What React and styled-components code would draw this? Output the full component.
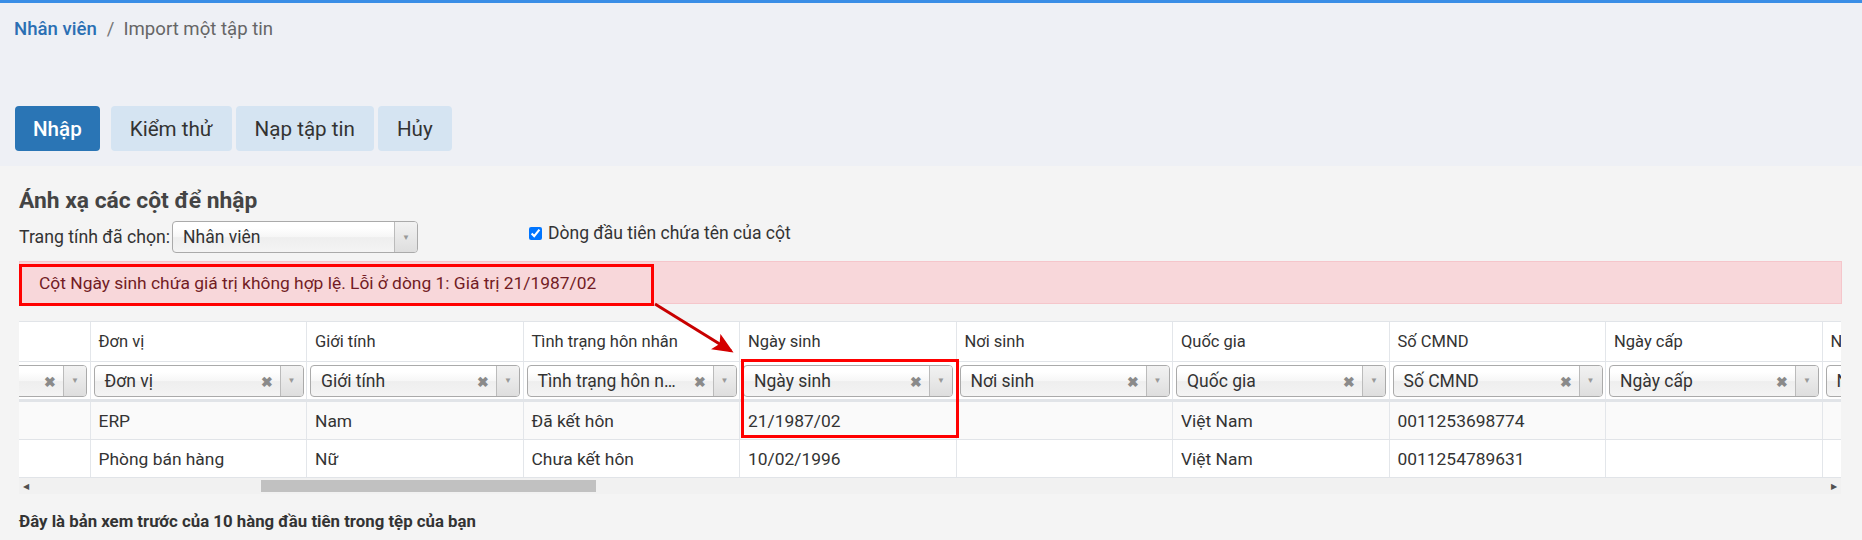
import React, { useLayoutEffect, useRef } from "react";
import styled, { createGlobalStyle } from "styled-components";

const GlobalStyle = createGlobalStyle`
  html, body {
    margin: 0;
    padding: 0;
    background: #f4f4f4;
    font-family: Roboto, "Liberation Sans", Arial, sans-serif;
    color: #333;
  }
  * { box-sizing: border-box; }
`;

const Page = styled.div`
  position: relative;
  width: 1862px;
  min-height: 540px;
`;

const TopLine = styled.div`
  height: 3px;
  background: #3a8ee6;
  box-shadow: 0 1px 3px rgba(0, 0, 0, 0.25);
`;

const Header = styled.div`
  background: #eef0f5;
  padding: 14px 15px 15px 14px;
`;

const Breadcrumb = styled.div`
  display: flex;
  align-items: center;
  height: 24px;
  font-size: 18.6px;
  color: #666;
  .link {
    color: #2b6fb3;
    font-weight: 500;
  }
  .sep {
    padding: 0 9px 0 10px;
    color: #777;
  }
`;

const Toolbar = styled.div`
  display: flex;
  gap: 4px;
  margin-top: 65px;
  margin-left: 1px;
`;

const Button = styled.button`
  height: 45px;
  padding: 0 ${(p) => (p.$primary ? 18 : 19)}px;
  margin-right: ${(p) => (p.$primary ? 7 : 0)}px;
  border: none;
  border-radius: 4px;
  font-family: Roboto, "Liberation Sans", Arial, sans-serif;
  font-size: 20.6px;
  font-weight: ${(p) => (p.$primary ? 500 : 400)};
  color: ${(p) => (p.$primary ? "#fff" : "#333")};
  background: ${(p) => (p.$primary ? "#2a75b5" : "#d5e4f2")};
  cursor: pointer;
`;

const Content = styled.div`
  padding: 22px 20px 0 19px;
`;

const Title = styled.h2`
  margin: 0;
  font-size: 22.8px;
  line-height: 25px;
  font-weight: 700;
  color: #444;
`;

const SheetRow = styled.div`
  display: flex;
  align-items: center;
  margin-top: 8px;
  height: 32px;
`;

const Label = styled.span`
  font-size: 17.7px;
  color: #333;
  margin-right: 2px;
`;

const ChosenSelect = styled.div`
  position: relative;
  flex-shrink: 0;
  display: flex;
  align-items: center;
  width: ${(p) => p.$width}px;
  height: 32px;
  border: 1px solid #aaa;
  border-radius: 4px;
  background: linear-gradient(#fff 20%, #f6f6f6 50%, #eee 52%, #f4f4f4 100%);
  font-size: 17.5px;
  color: #333;
  overflow: hidden;
  .value {
    flex: 1;
    min-width: 0;
    padding-left: 10px;
    white-space: nowrap;
    overflow: hidden;
    text-overflow: ellipsis;
  }
  .clear {
    width: 30px;
    padding-left: 4px;
    text-align: center;
    color: #8a8a8a;
    font-size: 14px;
    font-weight: 700;
    padding-top: 3px;
  }
  .arrow {
    display: flex;
    align-items: center;
    justify-content: center;
    width: 23px;
    height: 100%;
    border-left: 1px solid #bbb;
    background: linear-gradient(#f2f2f2, #dedede);
    color: #999;
    font-size: 8px;
  }
`;

const CheckLabel = styled.label`
  display: flex;
  align-items: center;
  margin-left: 111px;
  margin-top: -8px;
  font-size: 17.5px;
  color: #333;
  input {
    margin: 0 6px 0 0;
    width: 13px;
    height: 13px;
  }
`;

const Alert = styled.div`
  margin-top: 8px;
  height: 43px;
  display: flex;
  align-items: center;
  padding-left: 19px;
  background: #f8d7da;
  border: 1px solid #f5c6cb;
  color: #721c24;
  font-size: 17.4px;
`;

const TableViewport = styled.div`
  margin-top: 17px;
  overflow: hidden;
  width: 1822px;
  border-top: 1px solid #e1e4e8;
`;

const TableInner = styled.div`
  width: max-content;
`;

const Row = styled.div`
  display: flex;
  height: ${(p) => p.$h}px;
  background: ${(p) => p.$bg || "#fff"};
  border-bottom: ${(p) => p.$bb || 1}px solid #e1e4e8;
`;

const Cell = styled.div`
  width: 216.5px;
  flex-shrink: 0;
  display: flex;
  align-items: center;
  padding: 0 ${(p) => (p.$select ? 3 : 8)}px;
  border-right: 1px solid #e3e6ea;
  font-size: ${(p) => (p.$head ? 16.5 : 17.4)}px;
  color: #333;
  white-space: nowrap;
  overflow: hidden;
`;

const ScrollBar = styled.div`
  display: flex;
  align-items: center;
  width: 1822px;
  height: 16px;
  background: #f1f1f1;
  padding: 0 2px;
  .btn {
    width: 10px;
    font-size: 8px;
    color: #505050;
    text-align: center;
  }
  .track {
    flex: 1;
    height: 100%;
    display: flex;
    align-items: center;
    padding-left: 230px;
  }
  .thumb {
    width: 335px;
    height: 12px;
    background: #c1c1c1;
  }
`;

const Note = styled.div`
  margin-top: 17px;
  font-size: 16.8px;
  font-weight: 700;
  color: #333;
`;

const Overlay = styled.svg`
  position: absolute;
  top: 0;
  left: 0;
  pointer-events: none;
`;

const columns = [
  { name: "Họ và tên", rows: ["Nguyễn Văn An", "Trần Thị Bình"] },
  { name: "Đơn vị", rows: ["ERP", "Phòng bán hàng"] },
  { name: "Giới tính", rows: ["Nam", "Nữ"] },
  { name: "Tình trạng hôn nhân", rows: ["Đã kết hôn", "Chưa kết hôn"] },
  { name: "Ngày sinh", rows: ["21/1987/02", "10/02/1996"] },
  { name: "Nơi sinh", rows: ["", ""] },
  { name: "Quốc gia", rows: ["Việt Nam", "Việt Nam"] },
  { name: "Số CMND", rows: ["0011253698774", "0011254789631"] },
  { name: "Ngày cấp", rows: ["", ""] },
  { name: "Nơi cấp", rows: ["", ""] },
];

function Select({ value, width, clear }) {
  return (
    <ChosenSelect $width={width}>
      <span className="value">{value}</span>
      {clear && <span className="clear">✖</span>}
      <span className="arrow">▼</span>
    </ChosenSelect>
  );
}

export default function App() {
  const viewport = useRef(null);
  useLayoutEffect(() => {
    if (viewport.current) viewport.current.scrollLeft = 145;
  }, []);

  return (
    <Page>
      <GlobalStyle />
      <TopLine />
      <Header>
        <Breadcrumb>
          <span className="link">Nhân viên</span>
          <span className="sep">/</span>
          <span>Import một tập tin</span>
        </Breadcrumb>
        <Toolbar>
          <Button $primary>Nhập</Button>
          <Button>Kiểm thử</Button>
          <Button>Nạp tập tin</Button>
          <Button>Hủy</Button>
        </Toolbar>
      </Header>
      <Content>
        <Title>Ánh xạ các cột để nhập</Title>
        <SheetRow>
          <Label>Trang tính đã chọn:</Label>
          <Select value="Nhân viên" width={246} />
          <CheckLabel>
            <input type="checkbox" checked readOnly />
            Dòng đầu tiên chứa tên của cột
          </CheckLabel>
        </SheetRow>
        <Alert>
          Cột Ngày sinh chứa giá trị không hợp lệ. Lỗi ở dòng 1: Giá trị 21/1987/02
        </Alert>
        <TableViewport ref={viewport}>
          <TableInner>
            <Row $h={40}>
              {columns.map((c) => (
                <Cell key={c.name} $head>{c.name}</Cell>
              ))}
            </Row>
            <Row $h={40} $bb={3}>
              {columns.map((c) => (
                <Cell key={c.name} $select>
                  <Select value={c.name} width={210} clear />
                </Cell>
              ))}
            </Row>
            {[0, 1].map((i) => (
              <Row key={i} $h={38} $bg={i === 0 ? "#fafafa" : "#fff"}>
                {columns.map((c) => (
                  <Cell key={c.name}>{c.rows[i]}</Cell>
                ))}
              </Row>
            ))}
          </TableInner>
        </TableViewport>
        <ScrollBar>
          <span className="btn">◀</span>
          <div className="track">
            <div className="thumb" />
          </div>
          <span className="btn">▶</span>
        </ScrollBar>
        <Note>Đây là bản xem trước của 10 hàng đầu tiên trong tệp của bạn</Note>
      </Content>

      <Overlay width="1862" height="540" viewBox="0 0 1862 540">
        <defs>
          <marker id="head" markerWidth="7" markerHeight="6" refX="6" refY="3" orient="auto" markerUnits="strokeWidth">
            <path d="M0,0 L7,3 L0,6 L1.5,3 Z" fill="#d40000" />
          </marker>
        </defs>
        <rect x="20.5" y="265.5" width="632" height="39" fill="none" stroke="#f00" strokeWidth="3" />
        <rect x="742.5" y="360.5" width="215" height="76" fill="none" stroke="#f00" strokeWidth="3" />
        <line x1="655" y1="304" x2="731" y2="351" stroke="#c80000" strokeWidth="3" markerEnd="url(#head)" />
      </Overlay>
    </Page>
  );
}
